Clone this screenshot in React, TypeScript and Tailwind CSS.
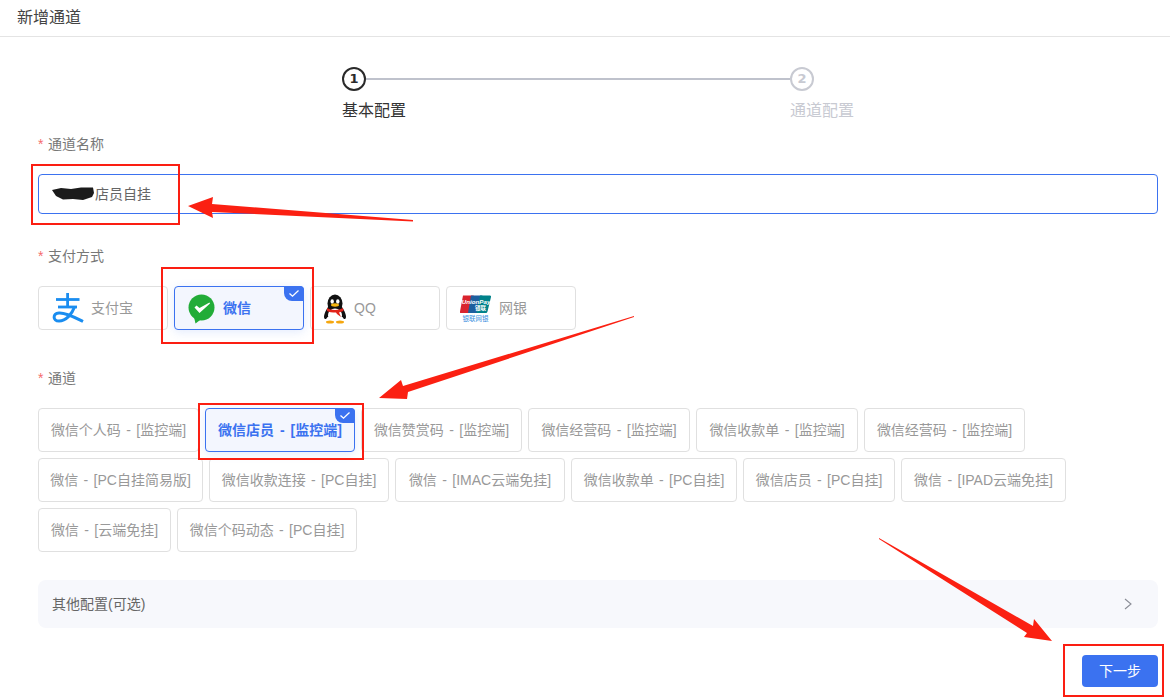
import React from "react";

const FONT = "font-['Liberation_Sans','Noto_Sans_CJK_SC',sans-serif]";

function Badge() {
  return (
    <span className="absolute -top-px -right-px flex h-[15px] w-5 items-center justify-center rounded-tr-[4px] rounded-bl-[8px] bg-[#3b72f0]">
      <svg width="12" height="9" viewBox="0 0 12 9" fill="none">
        <path d="M1.5 4.5 L4.5 7.2 L10.5 1.5" stroke="#fff" strokeWidth="1.3" />
      </svg>
    </span>
  );
}

function Label({ children }: { children: React.ReactNode }) {
  return (
    <div className="flex h-5 items-center text-[14px] leading-5 text-[#777]">
      <span className="w-[10px] text-[#f56c6c]">*</span>
      {children}
    </div>
  );
}

function Alipay() {
  return (
    <svg width="34" height="36" viewBox="0 0 34 36" fill="none" className="absolute left-[12px] top-[3px]">
      <g stroke="#1a8df0" strokeWidth="2.800">
        <path d="M5 9.500 H28.500" />
        <path d="M16.600 3 V17" />
        <path d="M7 17 H26" />
        <path d="M23.500 17 C21 24 15 31 8 31 C1.500 31 1.500 23.500 8 23 C15 22.500 23 27 32 31.500" strokeWidth="3" />
      </g>
    </svg>
  );
}

function Wechat() {
  return (
    <svg width="28" height="30" viewBox="0 0 28 30" className="absolute left-[13px] top-[7px]">
      <circle cx="13.500" cy="13.500" r="13" fill="#22ac38" />
      <path d="M6 23 L7.500 29.500 L13.500 25 Z" fill="#22ac38" />
      <path d="M6.500 13.500 L8.500 11.500 L11.500 14 L21.500 8.500 L22 9.500 L11.500 19 Z" fill="#fff" />
    </svg>
  );
}

function QQ() {
  return (
    <svg width="26" height="30" viewBox="0 0 26 30" className="absolute left-[11px] top-[7px]">
      <ellipse cx="13" cy="9.500" rx="7.500" ry="9" fill="#111" />
      <path d="M6 13 C2 19 1 24 3 25 C4 25.500 5 24 5.500 23 L20.500 23 C21 24 22 25.500 23 25 C25 24 24 19 20 13 Z" fill="#111" />
      <ellipse cx="13" cy="21.500" rx="7" ry="7" fill="#fff" />
      <ellipse cx="10.200" cy="7.500" rx="1.700" ry="2.300" fill="#fff" />
      <ellipse cx="15.800" cy="7.500" rx="1.700" ry="2.300" fill="#fff" />
      <ellipse cx="13" cy="11" rx="4" ry="1.700" fill="#f5b50f" />
      <path d="M5 14 C9 16.500 17 16.500 21 14 L21.500 17 L17 18.500 L19 23 L15 20 L14 18.500 C10 18.500 7 18 5 17 Z" fill="#e2231a" />
      <ellipse cx="8" cy="28" rx="4" ry="1.500" fill="#f5a70f" />
      <ellipse cx="18" cy="28" rx="4" ry="1.500" fill="#f5a70f" />
    </svg>
  );
}

function UnionPay() {
  return (
    <svg width="32" height="28" viewBox="0 0 32 28" className="absolute left-[13px] top-[8px]">
      <path d="M3 0.500 H13 Q14.500 0.500 14 2 L10.500 17 Q10 18 9 18 H1 Q-0.500 18 0 16.500 Z" fill="#d9232e" />
      <path d="M11 0.500 H22 Q23 0.500 22.800 2 L19.300 17 Q19 18 18 18 H8 Z" fill="#1d5f9f" />
      <path d="M20 0.500 H30 Q31.500 0.500 31 2 L27.500 16.500 Q27 18 26 18 H16.500 Z" fill="#00828a" />
      <text x="1.800" y="8.500" fontSize="6.200" fontWeight="700" fontStyle="italic" fill="#fff" fontFamily="Liberation Sans">UnionPay</text>
      <text x="15" y="15" fontSize="5.500" fontWeight="700" fill="#fff" fontFamily="Noto Sans CJK SC">银联</text>
      <text x="2.500" y="25.500" fontSize="6.500" fill="#3d8fe0" fontFamily="Noto Sans CJK SC">银联网银</text>
    </svg>
  );
}

const pays: { name: string; icon: React.ReactNode; on?: boolean; cls: string }[] = [
  { name: "支付宝", icon: <Alipay />, cls: "pl-[52px]" },
  { name: "微信", icon: <Wechat />, on: true, cls: "pl-[48px]" },
  { name: "QQ", icon: <QQ />, cls: "pl-[43px]" },
  { name: "网银", icon: <UnionPay />, cls: "pl-[52px]" },
];

const channels: { t: string; w: string; on?: boolean }[] = [
  { t: "微信个人码 - [监控端]", w: "w-[161px]" },
  { t: "微信店员 - [监控端]", w: "w-[150px]", on: true },
  { t: "微信赞赏码 - [监控端]", w: "w-[161px]" },
  { t: "微信经营码 - [监控端]", w: "w-[162px]" },
  { t: "微信收款单 - [监控端]", w: "w-[162px]" },
  { t: "微信经营码 - [监控端]", w: "w-[161px]" },
  { t: "微信 - [PC自挂简易版]", w: "w-[165px]" },
  { t: "微信收款连接 - [PC自挂]", w: "w-[180px]" },
  { t: "微信 - [IMAC云端免挂]", w: "w-[170px]" },
  { t: "微信收款单 - [PC自挂]", w: "w-[166px]" },
  { t: "微信店员 - [PC自挂]", w: "w-[152px]" },
  { t: "微信 - [IPAD云端免挂]", w: "w-[165px]" },
  { t: "微信 - [云端免挂]", w: "w-[133px]" },
  { t: "微信个码动态 - [PC自挂]", w: "w-[180px]" },
];

function Annotations() {
  return (
    <svg className="pointer-events-none absolute left-0 top-0" width="1170" height="697" viewBox="0 0 1170 697">
      <g fill="none" stroke="#fb1e12" strokeWidth="2">
        <rect x="32" y="165" width="147" height="59" />
        <rect x="162" y="268" width="151" height="75" />
        <rect x="199" y="404" width="164" height="55" />
        <rect x="1064" y="645" width="99" height="51" />
      </g>
      <g fill="#fb2012">
        <polygon points="188,206 213,197 212,204 413,220 413,221.500 212,212 213,218" />
        <polygon points="379,398 401,380 403,386 634,316 634,317 408,392 407,399" />
        <polygon points="1052,641 1034,619 1033,626 879,538 879,539 1027,633 1024,637" />
      </g>
    </svg>
  );
}

export default function App() {
  return (
    <div className={`relative h-[697px] w-[1170px] overflow-hidden bg-white ${FONT}`}>
      <div className="flex h-[37px] items-center border-b border-[#e4e4e4] pl-[17px] text-[16px] text-[#444]">新增通道</div>

      <div className="pl-[342px] pt-[30px]">
        <div className="flex w-[472px] items-center">
          <span className="flex h-6 w-6 items-center justify-center rounded-full border-2 border-[#2a2a2a] font-['DejaVu_Sans'] text-[13px] font-bold text-[#2a2a2a]">1</span>
          <span className="h-[2px] flex-1 bg-[#bfc2cc]" />
          <span className="flex h-6 w-6 items-center justify-center rounded-full border-2 border-[#c8cad2] font-['DejaVu_Sans'] text-[13px] font-bold text-[#c8cad2]">2</span>
        </div>
        <div className="mt-2 flex w-[512px] justify-between text-[16px] leading-6">
          <span className="text-[#333]">基本配置</span>
          <span className="text-[#c8cad2]">通道配置</span>
        </div>
      </div>

      <div className="pl-[38px] pr-3 pt-[11px]">
        <Label>通道名称</Label>
        <div className="mt-5 flex h-10 items-center rounded-[4px] border border-[#3b72f0] pl-[13px] text-[14px] text-[#666]">
          <svg width="44" height="14" viewBox="0 0 44 14" className="-ml-[1px]">
            <path d="M1 3 L10 1 L20 2 L30 0.500 L42 0.500 L43 6 L41 10 L32 13 L22 12 L12 12.500 L5 9 Z" fill="#1b1b1b" />
          </svg>
          店员自挂
        </div>

        <div className="mt-8">
          <Label>支付方式</Label>
        </div>
        <div className="mt-5 flex gap-[6px]">
          {pays.map((p) => (
            <div
              key={p.name}
              className={`relative flex h-11 w-[130px] items-center rounded-[4px] border text-[14px] ${p.cls} ${
                p.on
                  ? "border-[#3b72f0] bg-[#f3f6fe] font-bold text-[#3b72f0] shadow-[0_2px_10px_rgba(59,114,240,0.14)]"
                  : "border-[#e0e0e0] text-[#999]"
              }`}
            >
              {p.icon}
              {p.name}
              {p.on && <Badge />}
            </div>
          ))}
        </div>

        <div className="mt-[38px]">
          <Label>通道</Label>
        </div>
        <div className="mt-5 flex flex-wrap gap-[6px]">
          {channels.map((c, i) => (
            <div
              key={i}
              className={`relative flex h-11 items-center justify-center whitespace-nowrap rounded-[4px] border text-[14px] ${c.w} ${
                c.on
                  ? "border-[#3b72f0] bg-[#f3f6fe] font-bold text-[#3b72f0] shadow-[0_2px_10px_rgba(59,114,240,0.14)] [word-spacing:2px]"
                  : "border-[#e0e0e0] text-[#999] [word-spacing:1.500px]"
              }`}
            >
              {c.t}
              {c.on && <Badge />}
            </div>
          ))}
        </div>

        <div className="mt-7 flex h-12 items-center justify-between rounded-lg bg-[#f7f8fc] pl-[14px] pr-[25px] text-[14px] text-[#666]">
          其他配置(可选)
          <svg width="10" height="12" viewBox="0 0 10 12" fill="none">
            <path d="M2 1 L8 6 L2 11" stroke="#8a8d96" strokeWidth="1.100" />
          </svg>
        </div>

        <div className="mt-[27px] flex justify-end">
          <button className="h-8 w-[76px] rounded-[4px] bg-[#3b72f0] text-[14px] text-white">下一步</button>
        </div>
      </div>

      <Annotations />
    </div>
  );
}
